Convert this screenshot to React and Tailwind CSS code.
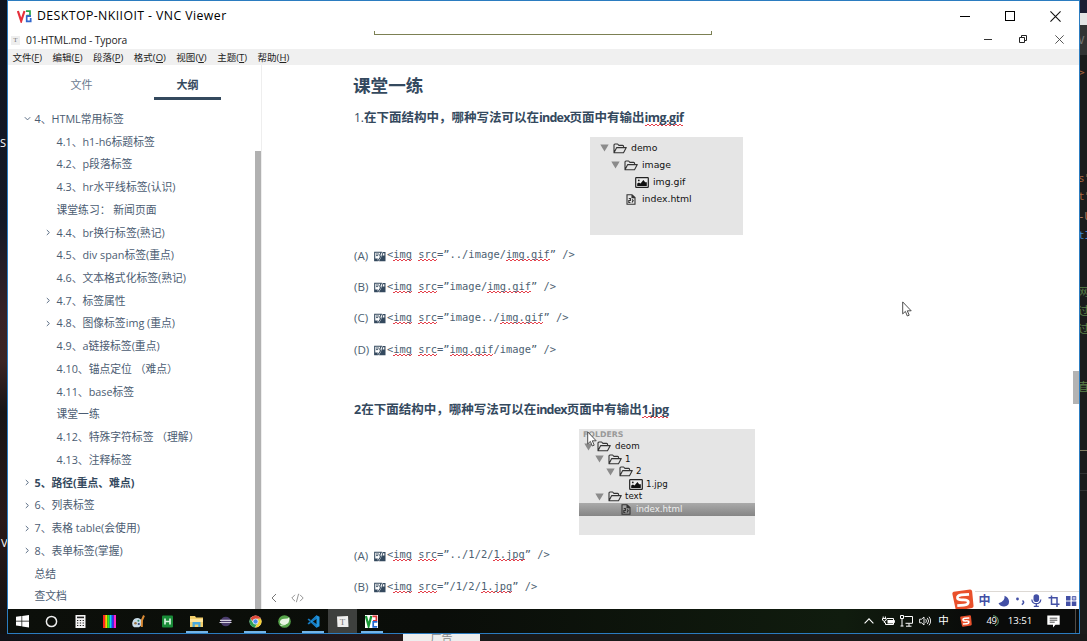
import React from "react";

const ui = "font-['Open_Sans','Noto_Sans_CJK_SC',sans-serif]";

const outline = [
  { t: "4、HTML常用标签", l: 0, a: "down" },
  { t: "4.1、h1-h6标题标签", l: 1 },
  { t: "4.2、p段落标签", l: 1 },
  { t: "4.3、hr水平线标签(认识)", l: 1 },
  { t: "课堂练习： 新闻页面", l: 1 },
  { t: "4.4、br换行标签(熟记)", l: 1, a: "right" },
  { t: "4.5、div span标签(重点)", l: 1 },
  { t: "4.6、文本格式化标签(熟记)", l: 1 },
  { t: "4.7、标签属性", l: 1, a: "right" },
  { t: "4.8、图像标签img (重点)", l: 1, a: "right" },
  { t: "4.9、a链接标签(重点)", l: 1 },
  { t: "4.10、锚点定位 （难点）", l: 1 },
  { t: "4.11、base标签", l: 1 },
  { t: "课堂一练", l: 1 },
  { t: "4.12、特殊字符标签 （理解）", l: 1 },
  { t: "4.13、注释标签", l: 1 },
  { t: "5、路径(重点、难点)", l: 0, a: "right", b: true },
  { t: "6、列表标签", l: 0, a: "right" },
  { t: "7、表格 table(会使用)", l: 0, a: "right" },
  { t: "8、表单标签(掌握)", l: 0, a: "right" },
  { t: "总结", l: 0 },
  { t: "查文档", l: 0 },
];

const menus = [
  ["文件", "F"],
  ["编辑", "E"],
  ["段落", "P"],
  ["格式", "O"],
  ["视图", "V"],
  ["主题", "T"],
  ["帮助", "H"],
];

function Arrow({ dir }) {
  return (
    <svg width="7" height="7" viewBox="0 0 7 7" fill="none" stroke="#5d6f86" strokeWidth="1">
      {dir === "down" ? <path d="M.8 2.2 3.5 4.9 6.2 2.2" /> : <path d="M1.8 1 4.4 3.5 1.8 6" />}
    </svg>
  );
}

function Cross({ size, color }) {
  return (
    <svg width={size} height={size} viewBox="0 0 10 10" stroke={color} strokeWidth="1" fill="none">
      <path d="M.4.4 9.6 9.6M9.6.4.4 9.6" />
    </svg>
  );
}

function Pointer() {
  return (
    <svg width="10" height="16" viewBox="0 0 10 16" fill="#fff" stroke="#3c3c3c" strokeWidth=".9">
      <path d="M.7.9v12l2.7-2.5 1.9 4.6 1.9-.8-1.9-4.4h3.9z" />
    </svg>
  );
}

function Spell({ children }) {
  return (
    <span className="bg-[linear-gradient(90deg,#e5414c_50%,transparent_50%),linear-gradient(90deg,transparent_50%,#e5414c_50%)] bg-repeat-x pb-[1px] [background-position:0_100%,0_calc(100%-1px)] [background-size:4px_1px]">
      {children}
    </span>
  );
}

function BoldSpell({ children }) {
  return (
    <span className="bg-[linear-gradient(90deg,#e5414c_50%,transparent_50%),linear-gradient(90deg,transparent_50%,#e5414c_50%)] bg-repeat-x font-['Open_Sans',sans-serif] tracking-[-0.550px] [background-position:0_100%,0_calc(100%-1px)] [background-size:4px_1px]">
      {children}
    </span>
  );
}

function BrokenImage() {
  return (
    <svg className="ml-[6px] mt-[2px]" width="12" height="11" viewBox="0 0 12 11">
      <path d="M.7 1.2h6.6L5.8 4l.7 2L4 9.8H.7z" fill="#fff" stroke="#34495e" strokeWidth="1.1" />
      <path d="M2 3h3M2 4.6h2.2" stroke="#34495e" strokeWidth=".9" />
      <path d="M.7 7.5h3.2L3.2 10H.7z" fill="#34495e" />
      <path d="M8.6 1h2.9v9.2H4.9l2.2-3.7z" fill="#34495e" />
      <path d="M9.1 2.2h1.3v2.3H8.6z" fill="#fff" />
    </svg>
  );
}

function Option({ k, children }) {
  return (
    <div className="flex h-[31.4px] items-center whitespace-pre text-[#4d5f72]">
      <span className="w-[14px] text-[11.6px]">({k})</span>
      <BrokenImage />
      <span className="ml-[1px] font-['DejaVu_Sans_Mono',monospace] text-[10.4px]">{children}</span>
    </div>
  );
}

function Triangle() {
  return (
    <svg width="9" height="8" viewBox="0 0 9 8">
      <path d="M.3.5h8.4L4.5 7.5z" fill="#8b8b8b" />
    </svg>
  );
}

function Folder() {
  return (
    <svg width="14" height="11" viewBox="0 0 14 11" fill="none" stroke="#333" strokeWidth="1.1" strokeLinejoin="round">
      <path d="M1 9.8V2Q1 1 2 1h2.6l1.3 1.4h3.7q1 0 1 1v1.2M1 9.8l2.7-5.2h9.6l-2.8 5.2z" />
    </svg>
  );
}

function Picture() {
  return (
    <svg width="14" height="11" viewBox="0 0 14 11">
      <rect x=".7" y=".7" width="12.6" height="9.6" rx=".6" fill="#eee" stroke="#222" strokeWidth="1.2" />
      <path d="M2.2 9V6.4l1.7-1 1.6 1.2L8.4 3l1.8 2.2h1.6V9z" fill="#111" />
      <circle cx="3.8" cy="3.4" r=".9" fill="#222" />
    </svg>
  );
}

function Page() {
  return (
    <svg width="10" height="11" viewBox="0 0 10 11" fill="none" stroke="#333" strokeWidth="1.1">
      <path d="M1 .8h5l3 2.6v6.8H1zM6 .8v2.8h3M2.8 4.5h1.6v2H2.8v2h1.6M6 5.5l1.2 1-1.2 2" />
    </svg>
  );
}

const taskIcons = [
  <g fill="#fff"><path d="M0 1.8 5.5 1v4.7H0zM6.2.9 13 0v5.7H6.2zM0 6.4h5.5v4.8L0 10.5zM6.2 6.4H13v6l-6.8-.9z" /></g>,
  <circle cx="6.5" cy="6.5" r="5.1" fill="none" stroke="#eee" strokeWidth="1.5" />,
  <g><rect x="1.5" width="10" height="13" fill="#f4f4f4" /><path d="M3 2.4h7" stroke="#222" strokeWidth="1.6" /><path d="M3 5.5h7M3 8h7M3 10.5h7" stroke="#222" strokeWidth="1.2" strokeDasharray="1.3 1.5" /></g>,
  <g><rect width="2.2" height="13" fill="#f22" /><rect x="2.2" width="2.2" height="13" fill="#fc0" /><rect x="4.4" width="2.2" height="13" fill="#3e2" /><rect x="6.6" width="2.2" height="13" fill="#1cf" /><rect x="8.8" width="2" height="13" fill="#33f" /><rect x="10.8" width="2.2" height="13" fill="#f2c" /></g>,
  <g><path d="M.3 7.500Q1.500 2.500 7 3.200l3 2v4.500l-3 2.600H2.200Q-.2 11 .3 7.500z" fill="#c9dce8" /><circle cx="3.500" cy="8.300" r="1.300" fill="#9a7448" /><circle cx="6.400" cy="5.800" r="1" fill="#386" /><circle cx="6.800" cy="9" r="1.100" fill="#347" /><path d="M12 .5 10 5 9.800 12" stroke="#d98a35" strokeWidth="2" fill="none" /></g>,
  <g><rect x="1" y=".5" width="11" height="12" rx="1" fill="#198b38" /><path d="M4 3.5v6M9 3.5v6M4 6.5h5" stroke="#d4f3dc" strokeWidth="1.7" /></g>,
  <g><path d="M0 1h5l1 1.5h7V12H0z" fill="#f3cf6b" /><path d="M0 4h13v3H0z" fill="#ffe59b" /><path d="M2.5 12V7h8v5H8.3V9.5H4.8V12z" fill="#4aa9dd" /></g>,
  <g><ellipse cx="6.800" cy="6.500" rx="5" ry="4.800" fill="#4a3c6c" /><path d="M1 5.300h11.500M.5 7.500h12" stroke="#d5d0df" strokeWidth="1.200" /></g>,
  <g><circle cx="6.500" cy="6.500" r="6" fill="#e0e0e0" /><path d="M6.500.5a6 6 0 0 1 5.300 3.200H6.500A3 3 0 0 0 3.700 6L1.400 3.400A6 6 0 0 1 6.500.5z" fill="#df4939" /><path d="M1.300 3.600a6 6 0 0 0 4.600 8.900L8 8.800A3 3 0 0 1 3.800 7.500z" fill="#2ea155" /><path d="M11.900 3.800a6 6 0 0 1-5.800 8.700l3-4.800a3 3 0 0 0-1-3.900z" fill="#f7cf35" /><circle cx="6.500" cy="6.500" r="2.500" fill="#4a8cf0" stroke="#eee" strokeWidth=".7" /></g>,
  <g><circle cx="6.500" cy="6.500" r="6.300" fill="#57a54b" /><path d="M1.800 7.800Q2 3.800 6.500 3.800q3.500 0 4.800-1.500.8 7-5 7.500-3 .2-4.500-2z" fill="#e9f6e4" /><path d="M2.500 10.500Q8 10.500 10.300 6.500" stroke="#e9f6e4" strokeWidth=".9" fill="none" /></g>,
  <g><path d="M9.500.3 12.500 1.700v9.600l-3 1.400L3 6.500zM9.500 3.700 5.800 6.500l3.700 2.800z" fill="#2196df" fillRule="evenodd" /><path d="M.5 4.500 1.800 3.500 9.500 9.500v3.200zM.5 8.500l1.300 1L9.500 3.700V.3z" fill="#167bc0" /></g>,
  <g><path d="M1 1.500 12 1l.5 11H1.500z" fill="#efefef" /><text x="6.600" y="10" fontSize="9" textAnchor="middle" fill="#777" fontFamily="Liberation Serif, serif">T</text></g>,
  <VncMark />,
];

function VncMark() {
  return (
    <g>
      <rect width="13" height="13" fill="#fff" />
      <path d="M.9 1 3.600 11 6.300 1" fill="none" stroke="#189735" strokeWidth="2.300" />
      <path d="M7.500 1.300h3.900v4.500H8" fill="none" stroke="#d33" strokeWidth="1.700" />
      <path d="M12.300 6.800H8.200v5h4" fill="none" stroke="#2367d1" strokeWidth="1.700" />
    </g>
  );
}

function SogouMark({ size }) {
  return (
    <svg width={size} height={size} viewBox="0 0 20 20">
      <path d="M1.500 2.500 16.500.5q1.500 0 1.800 1.500l1.300 13.500q0 1.500-1.400 1.800l-13 2.200q-1.700.2-2-1.500L.3 4.400q0-1.600 1.200-1.900z" fill="#e9502b" />
      <path d="M15.500 4.800 8.500 5.300Q4.500 6 5 8.300q.4 1.700 4.700 1.500 5-.2 5.100 2 0 2.500-4 2.900l-6 .5" fill="none" stroke="#fff" strokeWidth="2.500" />
    </svg>
  );
}

function TaskCell({ i, children }) {
  const running = [6, 8, 10, 12].includes(i);
  return (
    <div className={`relative flex h-full w-[29.140px] items-center justify-center ${i === 11 ? "bg-[#3e403e]" : ""}`}>
      <svg width="13" height="13" viewBox="0 0 13 13">{children}</svg>
      {running && <div className="absolute bottom-0 left-[3.500px] h-[2px] w-[22px] bg-[#74b4e8]" />}
    </div>
  );
}

function Tray() {
  const cell = "flex h-full shrink-0 items-center justify-center";
  return (
    <div className="ml-auto flex h-full items-center text-white">
      <div className={`${cell} w-[19px]`}>
        <svg width="10" height="6" viewBox="0 0 10 6" fill="none" stroke="#fff" strokeWidth="1.1"><path d="M.6 5.300 5 .8l4.400 4.500" /></svg>
      </div>
      <div className={`${cell} w-[19px]`}>
        <svg width="13" height="10" viewBox="0 0 13 10"><path d="M5.500 4h5.500v3.500H5.500z" fill="#fff" /><path d="M5 2.500h6.500v6H3.500V6.500M12.600 4.200v2.600M1.200.5v2M3.400.5v2M.5 2.500h3.700v1.700L2.400 5.300.5 4.200zM2.400 5v2" fill="none" stroke="#fff" /></svg>
      </div>
      <div className={`${cell} w-[18px]`}>
        <svg width="13" height="12" viewBox="0 0 13 12" fill="none" stroke="#fff"><path d="M4.500 1.500h8v6.800h-7M9 8.500v2.700M6 11.200h5.500M.5.500h3v3h-3zM2 3.500v7.700M.5 11h3" /></svg>
      </div>
      <div className={`${cell} w-[19px]`}>
        <svg width="12" height="10" viewBox="0 0 12 10" fill="none" stroke="#fff" strokeWidth=".9"><path d="M.6 3.200h2L5 1v8L2.600 6.800h-2zM6.700 3.200q1.500 1.800 0 3.600M8.300 1.900q2.700 3.100 0 6.200M10 .7q3.300 4.300 0 8.600" /></svg>
      </div>
      <div className={`${cell} w-[18px] text-[10.500px]`}>中</div>
      <div className={`${cell} w-[27px]`}><SogouMark size={12} /></div>
      <div className={`${cell} relative w-[25px] pr-[1px] text-[9.500px] tracking-[-0.5px]`}>
        49
        <svg className="absolute left-[7px] top-[6px]" width="12" height="12" viewBox="0 0 12 12" fill="none" stroke="#67ad81"><path d="M6 .8a5.200 5.200 0 0 1 2 10" /></svg>
      </div>
      <div className={`${cell} w-[31px] text-[9.700px]`}>13:51</div>
      <div className={`${cell} w-[35px]`}>
        <svg width="13" height="13" viewBox="0 0 13 13"><path d="M.3.500h12.400v9.300H8.500L6 12.500V9.800H.3z" fill="#fff" /><path d="M2.700 3.200h7.600M2.700 5.200h7.600M2.700 7.200h5" stroke="#222" strokeWidth=".8" /></svg>
      </div>
      <div className="ml-[4px] mr-[3.500px] h-full w-px bg-[#514b46]" />
    </div>
  );
}

function SogouBar() {
  return (
    <div className="absolute bottom-0 right-0 flex h-[18px] w-[127px] items-center text-[#4350a5]">
      <div className="w-[23px] shrink-0"><SogouMark size={22} /></div>
      <div className="flex h-full w-[104px] items-center border-t border-[#ddd9d4] bg-white">
        <span className="w-[19px] text-center text-[12px] font-bold leading-none">中</span>
        <svg width="19" height="12" viewBox="0 0 19 12"><path d="M10.500.8Q11.500 6.500 4.500 8.300 6.500 11.800 10.300 11.600q4.700-.5 4.800-5Q14.800 2.500 10.500.8z" fill="currentColor" /></svg>
        <svg width="15" height="12" viewBox="0 0 15 12"><circle cx="4.500" cy="4" r="1.400" fill="currentColor" /><path d="M9.500 5.500q2.500 2-.7 4.200" fill="none" stroke="currentColor" strokeWidth="1.600" /></svg>
        <svg width="17" height="13" viewBox="0 0 17 13"><rect x="5.500" y=".3" width="5.600" height="7.700" rx="2.800" fill="currentColor" /><path d="M3.800 5.500q.5 4.200 4.500 4.200t4.500-4.200M8.300 9.500V12M5.800 12.300h5" fill="none" stroke="currentColor" strokeWidth="1.300" /></svg>
        <svg width="18" height="12" viewBox="0 0 18 12" fill="none" stroke="currentColor" strokeWidth="1.500"><path d="M6.500.5v8.700h8M3.500 2.700h8.500V12" /></svg>
        <svg width="15" height="12" viewBox="0 0 15 12"><path d="M3 1h4.500v4.500H3zM3 6.500h4.500V11H3zM8.800 6.500h4.500V11H8.800z" fill="currentColor" /><path d="M9.300 1.500h3.500V5H9.300z" fill="#b6bae3" stroke="currentColor" strokeWidth=".8" /></svg>
      </div>
    </div>
  );
}

const fragments = [
  ["V", "top-[33px] text-[#777]"],
  [">", "top-[65px] text-[#a8643f]"],
  ["s\"", "top-[171px] text-[#a8643f]"],
  ["t\"", "top-[189px] text-[#a8643f]"],
  ["-U", "top-[209px] text-[#b77a5e]"],
  ["tI", "top-[228px] text-[#3d86cc]"],
  ["网", "top-[285px] text-[#5b8049]"],
  ["过", "top-[304px] text-[#5b8049]"],
  ["过", "top-[322px] text-[#5b8049]"],
  ["直", "top-[380px] text-[#5b8049]"],
];

export default function App() {
  return (
    <div className={`relative flex h-[641px] w-[1087px] flex-col overflow-hidden bg-[#17171a] ${ui}`} lang="zh-CN">
      <div className="flex h-[634px]">
        <div className="relative w-[7px] overflow-hidden bg-[linear-gradient(#10141f,#141926_35%,#382226_50%,#3b2524_57%,#171516_65%,#291919_82%,#111)] text-[11px] leading-[14px] text-white">
          <span className="absolute left-0 top-[136px]">S</span>
          <span className="absolute left-[1px] top-[536px]">V</span>
        </div>

        <div className="flex w-[1073px] flex-col border border-[#2b7cc0] bg-white">
          <div className="relative flex h-[30px] items-center pl-[9px] pr-[18px] text-[12.300px] text-black">
            <svg width="15" height="13" viewBox="0 0 15 13" fill="none" strokeWidth="2.200">
              <path d="M.9 1 4.200 11 7.500 1" stroke="#e5303b" />
              <path d="M9 1.200h4v4.300H9.500" stroke="#29a34c" strokeWidth="1.700" />
              <path d="M14 6.200H9.700v5.200h4V8" stroke="#3167cd" strokeWidth="1.700" />
            </svg>
            <span className="ml-[5px] whitespace-nowrap tracking-[0.420px]">DESKTOP-NKIIOIT - VNC Viewer</span>
            <div className="ml-auto flex items-center">
              <div className="mr-[35px] h-px w-[10px] bg-black" />
              <div className="mr-[35px] h-[10px] w-[10px] border border-black" />
              <Cross size={11} color="#111" />
            </div>
            <div className="absolute left-[366px] top-[30px] h-[4px] w-[338px] border border-t-0 border-[#7c8054]" />
          </div>

          <div className="flex h-[18px] items-center pl-[3px] pr-[15px] text-[10.300px] text-[#222]">
            <div className="flex h-[9px] w-[9px] items-center justify-center bg-[#eee] font-['Liberation_Serif',serif] text-[7px] text-[#777]">T</div>
            <span className="ml-[6px] whitespace-nowrap pt-px tracking-[-0.120px]">01-HTML.md - Typora</span>
            <div className="ml-auto flex items-center pb-[2px]">
              <div className="mr-[27px] h-px w-[8px] bg-[#333]" />
              <svg className="mr-[28px]" width="8" height="8" viewBox="0 0 8 8" fill="none" stroke="#222"><path d="M.5 2.500h5v5h-5zM2.500 2V.5h5v5H6" /></svg>
              <Cross size={9} color="#444" />
            </div>
          </div>

          <div className="flex h-[16px] items-center gap-[10.500px] bg-[#f0f0f0] pl-[4.500px] pt-[2px] text-[9.500px] text-[#222]">
            {menus.map(([name, key]) => (
              <span key={key} className="whitespace-nowrap">
                {name}(<span className="underline underline-offset-1">{key}</span>)
              </span>
            ))}
          </div>

          <div className="relative flex h-[544px] overflow-hidden">
            <aside className="relative w-[254px] shrink-0 border-r border-[#eeeeee] text-[#4b5c72]">
              <div className="flex h-[35px] pl-[40px] text-[11px]">
                <div className="flex w-[67px] items-center justify-center pt-[6px] text-[#6b7a8f]">文件</div>
                <div className="ml-[39px] flex w-[67px] items-center justify-center border-b-[3px] border-[#34495e] pt-[8px] font-bold text-[#34495e]">大纲</div>
              </div>
              <div className="pt-[7.600px] text-[10.800px]">
                {outline.map((o, i) => (
                  <div key={i} className={`flex h-[22.740px] items-center whitespace-pre ${o.l ? "pl-[36.500px]" : "pl-[15.500px]"} ${o.b ? "font-bold text-[#34495e]" : ""}`}>
                    <span className={`flex shrink-0 ${o.l ? "w-[12px]" : "w-[11px]"}`}>{o.a && <Arrow dir={o.a} />}</span>
                    {o.t}
                  </div>
                ))}
              </div>
              <div className="absolute right-0 top-[86px] h-[458px] w-[6px] bg-[#b1b1b1]" />
            </aside>

            <main className="flex-1 pl-[92px] text-[#34495e]">
              <h2 className="-ml-px flex h-[42px] items-center pb-[2px] text-[17.600px] font-bold">课堂一练</h2>
              <p className="h-[22px] whitespace-pre text-[12.500px] font-bold leading-[22px]">
                <span className="text-[12px] font-normal">1.</span>在下面结构中，哪种写法可以在<span className="tracking-[-0.800px]">index</span>页面中有输出<BoldSpell>img.gif</BoldSpell>
              </p>

              <div className="ml-[236px] mt-[8px] h-[98px] w-[153px] bg-[#e5e5e5] pt-[2.500px] font-['DejaVu_Sans',sans-serif] text-[9.300px] text-[#111]">
                <div className="flex h-[17px] items-center pl-[10px]"><Triangle /><span className="w-[4px]" /><Folder /><span className="ml-[4px]">demo</span></div>
                <div className="flex h-[17px] items-center pl-[21px]"><Triangle /><span className="w-[4px]" /><Folder /><span className="ml-[4px]">image</span></div>
                <div className="flex h-[17px] items-center pl-[45px]"><Picture /><span className="ml-[4px]">img.gif</span></div>
                <div className="flex h-[17px] items-center pl-[36px]"><Page /><span className="ml-[6px]">index.html</span></div>
              </div>

              <div className="mt-[4.500px]">
                <Option k="A">{"<"}<Spell>img</Spell> <Spell>src</Spell>=”../image/<Spell>img.gif</Spell>” /&gt;</Option>
                <Option k="B">{"<"}<Spell>img</Spell> <Spell>src</Spell>=”image/<Spell>img.gif</Spell>” /&gt;</Option>
                <Option k="C">{"<"}<Spell>img</Spell> <Spell>src</Spell>=”image../<Spell>img.gif</Spell>” /&gt;</Option>
                <Option k="D">{"<"}<Spell>img</Spell> <Spell>src</Spell>=”<Spell>img.gif</Spell>/image” /&gt;</Option>
              </div>

              <p className="mt-[33.500px] h-[22px] whitespace-pre text-[12.500px] font-bold leading-[22px]">
                2在下面结构中，哪种写法可以在<span className="tracking-[-0.800px]">index</span>页面中有输出<BoldSpell>1.jpg</BoldSpell>
              </p>

              <div className="relative ml-[225px] mt-[8px] h-[106px] w-[176px] bg-[#e5e5e5] pt-px font-['DejaVu_Sans',sans-serif] text-[8.700px] text-[#111]">
                <div className="flex h-[11px] items-center pl-[4px] text-[7.800px] font-bold text-[#999]">FOLDERS</div>
                <div className="flex h-[12.500px] items-center pl-[5px]"><Triangle /><span className="w-[4px]" /><Folder /><span className="ml-[4px]">deom</span></div>
                <div className="flex h-[12.500px] items-center pl-[16px]"><Triangle /><span className="w-[4px]" /><Folder /><span className="ml-[3px]">1</span></div>
                <div className="flex h-[12.500px] items-center pl-[27px]"><Triangle /><span className="w-[4px]" /><Folder /><span className="ml-[3px]">2</span></div>
                <div className="flex h-[12.500px] items-center pl-[50px]"><Picture /><span className="ml-[3px]">1.jpg</span></div>
                <div className="flex h-[12.500px] items-center pl-[16px]"><Triangle /><span className="w-[4px]" /><Folder /><span className="ml-[3px]">text</span></div>
                <div className="flex h-[13px] items-center bg-linear-to-b from-[#aaaaaa] to-[#858585] pl-[42px] text-[#eee]"><Page /><span className="ml-[5px]">index.html</span></div>
                <div className="absolute left-[8px] top-[2px]"><Pointer /></div>
              </div>

              <div className="mt-[5px]">
                <Option k="A">{"<"}<Spell>img</Spell> <Spell>src</Spell>=”../1/2/<Spell>1.jpg</Spell>” /&gt;</Option>
                <Option k="B">{"<"}<Spell>img</Spell> <Spell>src</Spell>=”/1/2/<Spell>1.jpg</Spell>” /&gt;</Option>
              </div>
            </main>

            <div className="absolute bottom-[6px] left-[263px] flex items-center gap-[14px]">
              <svg width="6" height="10" viewBox="0 0 6 10" fill="none" stroke="#777"><path d="M5 1 1 5l4 4" /></svg>
              <svg width="13" height="10" viewBox="0 0 13 10" fill="none" stroke="#888" strokeWidth=".9"><path d="M4 1.800.8 5 4 8.200M9 1.800 12.200 5 9 8.200M7.600.8 5.400 9.200" /></svg>
            </div>
            <div className="absolute left-[894px] top-[236px]"><Pointer /></div>
            <div className="absolute right-0 top-[306px] h-[33px] w-[6px] bg-[#b3b3b3]" />
            <SogouBar />
          </div>

          <div className="flex h-[24px] items-center bg-[linear-gradient(90deg,#0c0f0a,#0a0d09_40%,#101c0e_78%,#0a0b0a_90%)]">
            <div className="-ml-[0.500px] flex h-full">
              {taskIcons.map((icon, i) => (
                <TaskCell key={i} i={i}>{icon}</TaskCell>
              ))}
            </div>
            <Tray />
          </div>
        </div>

        <div className="relative w-[7px] overflow-hidden bg-[#1b1b1b] font-['DejaVu_Sans_Mono','Noto_Sans_CJK_SC',monospace] text-[11px] leading-[16px]">
          <div className="h-[13px] bg-[#1c1e33]" />
          <div className="h-[12px] bg-[#e4e4e4]" />
          <div className="h-[30px] bg-[#333]" />
          {fragments.map(([t, c], i) => (
            <span key={i} className={`absolute left-[-2px] whitespace-nowrap ${c}`}>{t}</span>
          ))}
          <div className="absolute left-0 top-[450px] h-px w-full bg-[#827d62]" />
          <div className="absolute left-0 top-[473px] h-px w-full bg-[#333]" />
          <div className="absolute left-0 top-[490px] h-px w-full bg-[#333]" />
        </div>
      </div>
      <div className="flex h-[7px] overflow-hidden bg-[linear-gradient(90deg,#111217,#19151b_20%,#241819_37%,#191919_45%)]">
        <div className="ml-[403px] h-[7px] w-[77px] overflow-hidden bg-[#eee] text-center text-[11px] leading-[8px] text-[#888]">广告</div>
      </div>
    </div>
  );
}
